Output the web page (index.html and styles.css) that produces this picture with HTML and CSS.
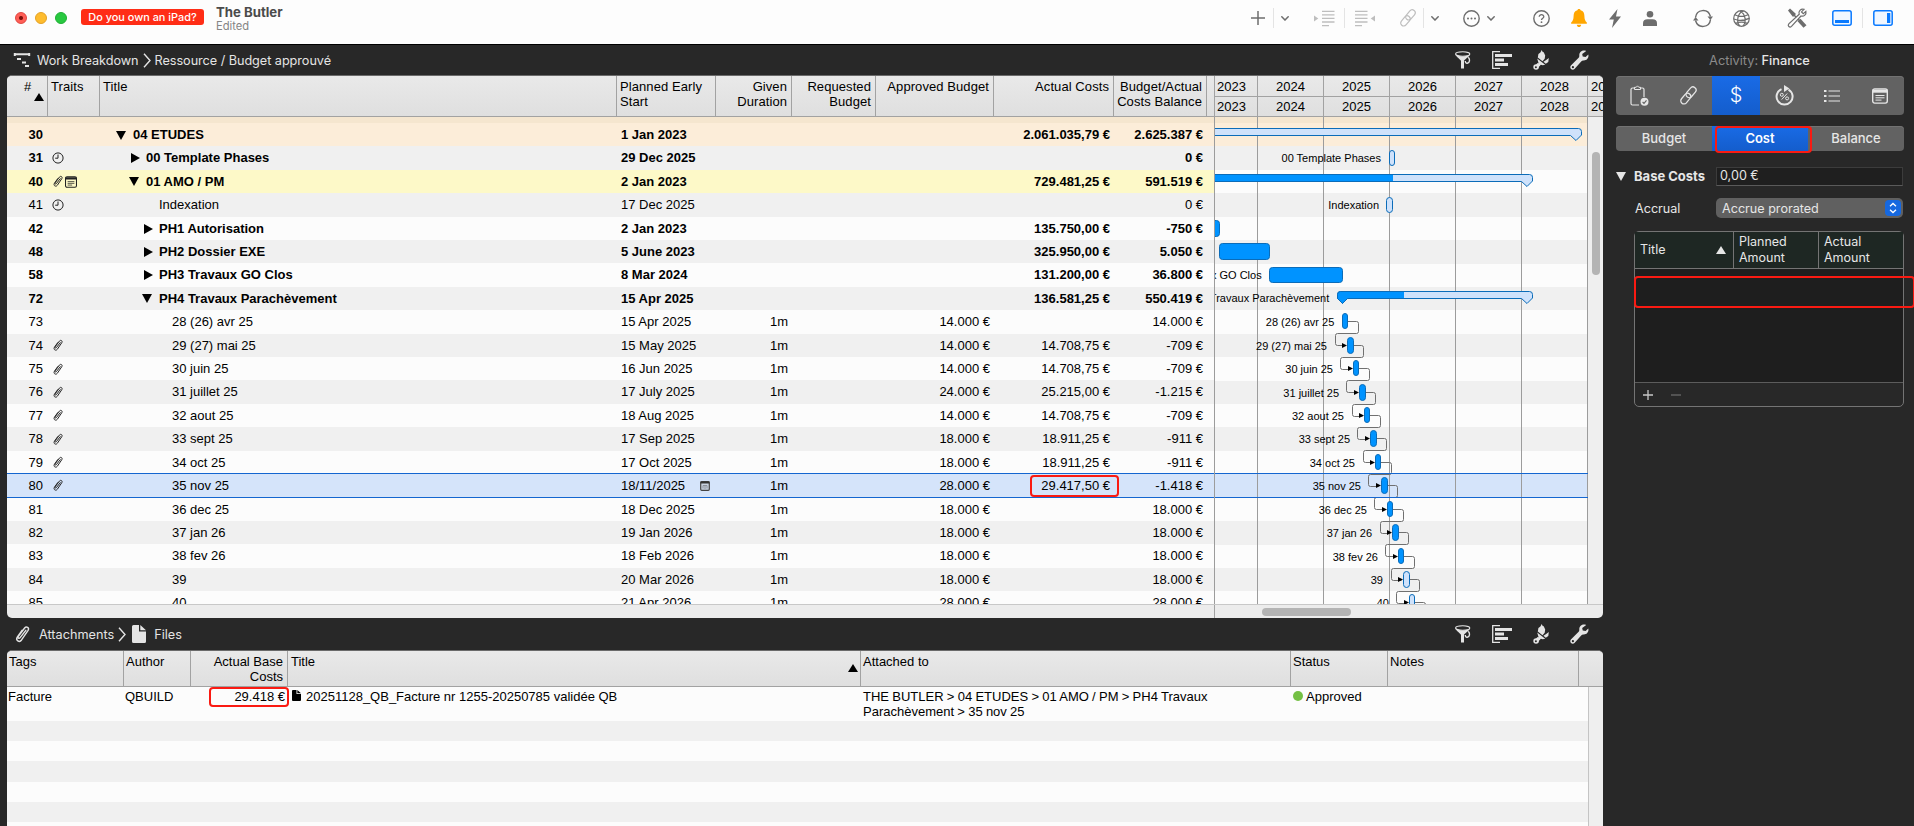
FILE: index.html
```html
<!DOCTYPE html>
<html lang="en">
<head>
    <meta charset="utf-8">
    <title>The Butler</title>
    <link rel="stylesheet" href="styles.css">
</head>
<body onload="buildPage()">

<!-- shared icons -->
<svg width="0" height="0" class="defs">
    <symbol id="i-chev" viewBox="0 0 8 5"><path d="M.8 .8L4 4L7.2 .8" fill="none" stroke="currentColor" stroke-width="1.5" stroke-linecap="round"/></symbol>
    <symbol id="i-link" viewBox="0 0 18 18"><g fill="none" stroke="currentColor" stroke-width="1.200" transform="rotate(-50 9 9)"><rect x="-.6" y="5.900" width="11.400" height="6" rx="3"/><rect x="7.200" y="5.900" width="11.400" height="6" rx="3"/></g></symbol>
    <symbol id="i-clip" viewBox="0 0 14 16"><path d="M9.800 4.500L5 10.600c-.9 1.200-2.300.2-1.500-1L8.800 2.500c1.500-1.900 4.200-.3 2.900 2L6.200 12.600c-1.800 2.500-5.300.4-3.600-2.400L6.600 4.500" fill="none" stroke="currentColor" stroke-width="1.200" stroke-linecap="round"/></symbol>
    <symbol id="i-clock" viewBox="0 0 12 12"><circle cx="6" cy="6" r="5.100" fill="none" stroke="currentColor"/><path d="M6 2.500V6.200H3.200" fill="none" stroke="currentColor"/></symbol>
    <symbol id="i-note" viewBox="0 0 16 16"><rect x=".7" y=".9" width="14.600" height="14.200" rx="2" fill="none" stroke="currentColor" stroke-width="1.400"/><path d="M.7 1.500h14.600v3.200H.7z" fill="currentColor"/><path d="M3.500 7.500h9M3.500 9.800h9M3.500 12.100h6" stroke="currentColor"/></symbol>
    <symbol id="i-funnel" viewBox="0 0 16 18"><ellipse cx="7.700" cy="3" rx="7.100" ry="2.200" fill="none" stroke="currentColor" stroke-width="1.100"/><path d="M.4 3.300C1 6 5.800 8.500 6 10v7.500h3V10C9.200 8.500 14.400 6 15 3.300 12 6.100 3.400 6.100.4 3.300z" fill="currentColor"/><path d="M13.300 6.200c2 2 1.500 5.700-1 6-1.500.1-2-1-2-2.200" fill="none" stroke="currentColor" stroke-width="1.400"/></symbol>
    <symbol id="i-align" viewBox="0 0 20 18"><path d="M8 .7H.7v16.600H8" fill="none" stroke="currentColor" stroke-width="1.300"/><path d="M3 3h17v3H3zM3 7.500h9v3H3zM3 12h13v3H3z" fill="currentColor"/></symbol>
    <symbol id="i-brush" viewBox="0 0 16 20"><path d="M8.700 0l1 2 1 .2 1.500 3.300-.5 3.300-2.200 2.500-4.700-3.700.6-3.500 2-1.500zM4.200 8.500l8 6.300-2.400.5-2-.5-2.500 2.500-2-1.800L5.500 13zM12.800 10.200l3-2.200-.5 4-2.500 1.700-2.400-1.900z" fill="currentColor"/><path d="M5.800 14L3.500 17" stroke="currentColor" stroke-width="3.600"/><circle cx="3.100" cy="17" r="2.800" fill="currentColor"/><circle cx="2.900" cy="17.300" r="1" fill="#282828"/></symbol>
    <symbol id="i-wrench" viewBox="0 0 19 20"><path d="M16.200.9C12.900-.7 9 1.700 9.300 5.600c.1 1-.3 1.700-.9 2.400L.9 15.500c-2 2.600 1.200 5.600 3.600 3.600l6.700-7.700c.7-.7 1.400-1 2.400-.9 3.300.2 5.500-2.900 4.700-6L15.600 7l-2.900-.4-.5-2.700z" fill="currentColor"/><circle cx="2.900" cy="17.200" r="1.100" fill="#282828"/></symbol>
    <symbol id="i-doc" viewBox="0 0 14 18"><path d="M1.500 0H7v6.500h7V16.500q0 1.500-1.500 1.500h-11Q0 18 0 16.500v-15Q0 0 1.500 0zM8.300 0L14 5.300H8.300z" fill="currentColor"/></symbol>
    <symbol id="i-crumb" viewBox="0 0 8 15"><path d="M1 .8L7 7.500L1 14.200" fill="none" stroke="currentColor" stroke-width="1.400"/></symbol>
</svg>

<div class="toolbar">
    <span class="light red"></span><span class="light amber"></span><span class="light green"></span>
    <span class="promo">Do you own an iPad?</span>
    <div class="doc-name"><b>The Butler</b><small>Edited</small></div>

    <div class="tools">
        <svg width="14" height="14"><path d="M7 0v14M0 7h14" stroke="currentColor" stroke-width="1.500"/></svg>
        <i class="sep s1"></i>
        <svg class="m8" width="8" height="5"><use href="#i-chev"/></svg>
        <svg class="m25 off" width="20" height="17"><path d="M0 5.500l4.300 3L0 11.500z" fill="currentColor"/><path d="M8 1.300h12.500M8 4.800h12.500M8 8.400h12.500M8 12h12.500M8 15.700h7" stroke="currentColor" stroke-width="1.300"/></svg>
        <i class="sep s2"></i>
        <svg class="m10 off" width="20" height="17"><path d="M20 5.500l-4.300 3L20 11.500z" fill="currentColor"/><path d="M0 1.300h12.500M0 4.800h12.500M0 8.400h12.500M0 12h12.500M0 15.700h7" stroke="currentColor" stroke-width="1.300"/></svg>
        <svg class="m24 off" width="18" height="18"><use href="#i-link"/></svg>
        <i class="sep s3"></i>
        <svg class="m7" width="8" height="5"><use href="#i-chev"/></svg>
        <svg class="m24" width="17" height="17"><circle cx="8.500" cy="8.500" r="7.700" fill="none" stroke="currentColor" stroke-width="1.400"/><circle cx="5" cy="8.500" r="1" fill="currentColor"/><circle cx="8.500" cy="8.500" r="1" fill="currentColor"/><circle cx="12" cy="8.500" r="1" fill="currentColor"/></svg>
        <svg class="m7" width="8" height="5"><use href="#i-chev"/></svg>
        <svg class="m38" width="17" height="17"><circle cx="8.500" cy="8.500" r="7.700" fill="none" stroke="currentColor" stroke-width="1.400"/><path d="M6.200 6.800c0-3 4.700-2.900 4.600 0 0 1.500-2.300 1.500-2.300 3.300" fill="none" stroke="currentColor" stroke-width="1.300"/><circle cx="8.500" cy="12.200" r=".9" fill="currentColor"/></svg>
        <svg class="m21 bell" width="16" height="18"><path d="M8 0c1 0 1.500.6 1.600 1.300C12.500 2 13.300 4 13.400 7c.1 3.500.6 4.600 2.400 6.500.4.700 0 1.300-.7 1.300H.9c-.7 0-1.100-.6-.7-1.300C2 11.600 2.500 10.500 2.600 7c.1-3 .9-5 3.800-5.700C6.500.6 7 0 8 0zM5.800 15.700h4.400C10 17.300 9.100 18 8 18s-2-.7-2.200-2.300z" fill="currentColor"/></svg>
        <svg class="m22" width="12" height="19"><path d="M8.500 0L0 10.500h4.800L3 19l9-11.500H7z" fill="currentColor"/></svg>
        <svg class="m22" width="14" height="15"><circle cx="7" cy="3.300" r="3.300" fill="currentColor"/><path d="M0 15v-2.500Q0 8.300 4.500 8.300h5q4.500 0 4.500 4.200V15z" fill="currentColor"/></svg>
        <svg class="m36" width="20" height="19"><path d="M2.500 8.500C3.500.3 14.800-1.300 17.500 7.500M17.500 10.500c-1 8.200-12.300 9.800-15 1" fill="none" stroke="currentColor" stroke-width="1.500"/><path d="M14.500 7.500h5.500L17.400 11zM0 11.500h5.500L2.600 8z" fill="currentColor"/></svg>
        <svg class="m20" width="17" height="17"><g fill="none" stroke="currentColor" stroke-width="1.200"><circle cx="8.500" cy="8.500" r="7.800"/><path d="M10.500.9C3.500 3.500 3.500 13.500 7 16M7 1c6.500 3.500 6 12 3 15M1.800 4.800c4 2 9 2 13.200 0M.8 9c5 1.800 11 1.400 15.400-.6M2.500 13.200c4-1.300 8-1.300 11.700 0"/></g></svg>
        <svg class="m37" width="20" height="20"><path d="M1 2.500L3 .5l6 5.500-3 3z" fill="currentColor"/><path d="M7 7l6 6" stroke="currentColor" stroke-width="1.500"/><path d="M12 12l6 6.500" stroke="currentColor" stroke-width="4"/><path d="M17 1.300c-3.200-.9-6 2-4.800 5L1.800 15.800c-1.600 2 .8 4.300 2.700 2.600L14 8c3 .9 5.600-1.600 4.900-4.600L16.300 5.700l-1.800-1.800z" fill="#fdfdfd" stroke="currentColor" stroke-width="1.200"/></svg>
        <svg class="m25 blue" width="20" height="16"><rect x=".8" y=".8" width="18.400" height="14.400" rx="2" fill="#f1f7ff" stroke="currentColor" stroke-width="1.500"/><path d="M3 10h14v3H3z" fill="currentColor"/></svg>
        <i class="sep s4"></i>
        <svg class="m10 blue" width="20" height="16"><rect x=".8" y=".8" width="18.400" height="14.400" rx="2" fill="#f1f7ff" stroke="currentColor" stroke-width="1.500"/><path d="M14 3h3.300v10H14z" fill="currentColor"/></svg>
    </div>
</div>

<div class="main">
    <div class="left">

        <div class="crumbs">
            <svg class="c-wb" width="16" height="14"><path d="M0 1.200h16M.8 0v3M15.200 0v3M3 6h4M8 9.500h4M11 13h4" stroke="currentColor" stroke-width="2"/></svg>
            <span>Work Breakdown</span>
            <svg class="arrow" width="8" height="15"><use href="#i-crumb"/></svg>
            <span>Ressource / Budget approuvé</span>
            <div class="crumb-tools">
                <svg width="16" height="18"><use href="#i-funnel"/></svg>
                <svg width="20" height="18"><use href="#i-align"/></svg>
                <svg width="16" height="20"><use href="#i-brush"/></svg>
                <svg width="19" height="20"><use href="#i-wrench"/></svg>
            </div>
        </div>

        <div class="panel wb">
            <div class="wb-head">
                <div class="cols head">
                    <div class="num">#<i class="sort"></i></div>
                    <div>Traits</div>
                    <div>Title</div>
                    <div>Planned Early<br>Start</div>
                    <div class="r">Given<br>Duration</div>
                    <div class="r">Requested<br>Budget</div>
                    <div class="r">Approved Budget</div>
                    <div class="r">Actual Costs</div>
                    <div class="r">Budget/Actual<br>Costs Balance</div>
                </div>
                <div class="years">
                    <span class="first">2023</span><span>2024</span><span>2025</span><span>2026</span><span>2027</span><span>2028</span><span class="last">2029</span>
                    <span class="first">2023</span><span>2024</span><span>2025</span><span>2026</span><span>2027</span><span>2028</span><span class="last">2029</span>
                </div>
            </div>
            <div class="wb-body">
                <div class="rows" id="rows"></div>
                <div class="gantt" id="gantt"></div>
                <div class="vscroll"><i></i></div>
            </div>
            <div class="hscroll"><div><i></i></div></div>
        </div>

        <div class="crumbs second">
            <svg class="c-att" width="17" height="19"><use href="#i-clip"/></svg>
            <span>Attachments</span>
            <svg class="arrow a2" width="8" height="15"><use href="#i-crumb"/></svg>
            <svg class="c-doc" width="14" height="18"><use href="#i-doc"/></svg>
            <span>Files</span>
            <div class="crumb-tools">
                <svg width="16" height="18"><use href="#i-funnel"/></svg>
                <svg width="20" height="18"><use href="#i-align"/></svg>
                <svg width="16" height="20"><use href="#i-brush"/></svg>
                <svg width="19" height="20"><use href="#i-wrench"/></svg>
            </div>
        </div>

        <div class="panel att">
            <div class="att-cols att-head">
                <div>Tags</div>
                <div>Author</div>
                <div class="r">Actual Base<br>Costs</div>
                <div class="t">Title<i class="sort"></i></div>
                <div>Attached to</div>
                <div>Status</div>
                <div>Notes</div>
                <div></div>
            </div>
            <div class="att-body">
                <div class="att-list">
                    <div class="att-cols att-row">
                        <div>Facture</div>
                        <div>QBUILD</div>
                        <div class="r cost">29.418 €<i class="mark m-cost"></i></div>
                        <div class="file"><svg width="9" height="11" viewBox="0 0 14 18" preserveAspectRatio="none"><use href="#i-doc"/></svg>20251128_QB_Facture nr 1255-20250785 validée QB</div>
                        <div class="path">THE BUTLER &gt; 04 ETUDES &gt; 01 AMO / PM &gt; PH4 Travaux<br>Parachèvement &gt; 35 nov 25</div>
                        <div class="status"><i></i>Approved</div>
                        <div></div>
                    </div>
                    <div class="stripes"></div>
                </div>
                <div class="vscroll"></div>
            </div>
        </div>
    </div>

    <div class="side">
        <h4><span>Activity:</span> Finance</h4>
        <div class="seg icons">
            <div><svg width="20" height="22"><path d="M5 3H2.500Q1 3 1 4.500v14Q1 20 2.500 20H9M10 3h2.500Q14 3 14 4.500V12" fill="none" stroke="currentColor" stroke-width="1.200"/><path d="M4.500 4.500V2.300H6.200Q7.500-.6 8.800 2.300h1.700v2.200z" fill="none" stroke="currentColor"/><circle cx="14.500" cy="16.800" r="4" fill="currentColor"/><path d="M12.600 17l1.400 1.400 2.500-3" fill="none" stroke="#626262" stroke-width="1.100"/></svg></div>
            <div><svg width="19" height="19"><use href="#i-link"/></svg></div>
            <div class="on dollar">$</div>
            <div><svg width="19" height="21"><path d="M6.500 4.200A8 8 0 1 0 13.500 4.600" fill="none" stroke="currentColor" stroke-width="2"/><path d="M9 0l5.500 3.500L9 7z" fill="currentColor"/><path d="M12.200 8.500l-5.500 6" stroke="currentColor"/><circle cx="6.800" cy="9.800" r="1.500" fill="none" stroke="currentColor"/><circle cx="12.100" cy="13.400" r="1.500" fill="none" stroke="currentColor"/></svg></div>
            <div><svg width="16" height="14"><path d="M0 2h2.500M0 7h2.500M0 12h2.500" stroke="currentColor" stroke-width="1.800"/><path d="M4.500 2H16M4.500 7H16M4.500 12H16" stroke="currentColor" stroke-width="1.100"/></svg></div>
            <div><svg width="16" height="16"><use href="#i-note"/></svg></div>
        </div>
        <div class="seg tabs">
            <div>Budget</div>
            <div class="on">Cost<i class="mark m-tab"></i></div>
            <div>Balance</div>
        </div>
        <div class="field base">
            <i class="tri"></i><b>Base Costs</b><div class="input">0,00 €</div>
        </div>
        <div class="field accrual">
            <span>Accrual</span>
            <div class="select">Accrue prorated<svg width="16" height="16"><rect width="16" height="16" rx="4" fill="#1568e0"/><path d="M5 6.300L8 3.500l3 2.800M5 9.700l3 2.800 3-2.800" fill="none" stroke="#fff" stroke-width="1.300"/></svg></div>
        </div>
        <div class="costs">
            <div class="costs-head">
                <div class="c1">Title<i class="sort"></i></div>
                <div>Planned<br>Amount</div>
                <div>Actual<br>Amount</div>
            </div>
            <div class="costs-body"></div>
            <div class="costs-foot">
                <svg width="10" height="10"><path d="M5 0v10M0 5h10" stroke="#c8c8c8" stroke-width="1.300"/></svg>
                <svg width="10" height="10"><path d="M0 5h10" stroke="#6a6a6a" stroke-width="1.300"/></svg>
            </div>
            <i class="mark m-row"></i>
        </div>
    </div>
</div>

<script src="script.js"></script>
</body>
</html>
```

FILE: styles.css
```css
*{
    box-sizing:border-box;
}

body{
    margin:0;
    width:1914px;
    height:826px;
    overflow:hidden;
    background:#282828;
    font-family:"Liberation Sans", Arial, sans-serif;
    font-size:13px;
    line-height:15px;
    color:#000;
    white-space:nowrap;
}

svg{
    display:block;
    flex:none;
    overflow:visible;
}

.defs{
    position:absolute;
}

/* toolbar */
.toolbar{
    display:flex;
    height:45px;
    padding-left:15px;
    background:#fdfdfd;
    border-bottom:1px solid #000;
    font-family:Inter, sans-serif;
}

.light{
    width:12px;
    height:12px;
    margin:12px 8px 0 0;
    border-radius:50%;
    border:1px solid #e0443e;
}
.light.red{
    background:radial-gradient(circle, #7c0f0a 0 1.5px, #ff5f57 2.5px);
}
.light.amber{
    background:#febc2e;
    border-color:#e5a226;
}
.light.green{
    background:#28c840;
    border-color:#20b035;
}

.promo{
    width:123px;
    height:16px;
    margin:9px 0 0 6px;
    border-radius:3px;
    background:#ff2d16;
    color:#fff;
    font-size:10.9px;
    font-weight:500;
    line-height:16px;
    text-align:center;
}

.doc-name{
    width:200px;
    margin:4px 0 0 12px;
    color:#4b4b4b;
}
.doc-name b{
    display:block;
    font-size:13.2px;
    line-height:16px;
}
.doc-name small{
    display:block;
    font-size:11.2px;
    line-height:13px;
    color:#858585;
}

.tools{
    display:flex;
    align-items:center;
    height:36px;
    margin-left:835px;
    color:#6d6d6d;
}
.off{ color:#bebebe; }
.bell{ color:#ffa600; }
.blue{ color:#0a7aff; }
.m7{ margin-left:7px; }
.m8{ margin-left:7px; }
.m10{ margin-left:10px; }
.m20{ margin-left:20px; }
.m21{ margin-left:21px; }
.m22{ margin-left:22px; }
.m24{ margin-left:24px; }
.m25{ margin-left:25px; }
.m36{ margin-left:36px; }
.m37{ margin-left:37px; }
.m38{ margin-left:38px; }

.sep{
    width:1px;
    height:20px;
    background:#e4e4e4;
}
.s1{ margin-left:8px; }
.s2{ margin-left:10px; }
.s3{ margin-left:6px; }
.s4{ margin-left:10px; }

/* layout */
.main{
    display:flex;
    height:781px;
}
.left{
    width:1604px;
    padding-left:7px;
}

.crumbs{
    display:flex;
    align-items:center;
    height:30px;
    padding-left:7px;
    color:#e4e4e4;
    font-family:Inter, sans-serif;
    font-size:12.7px;
    letter-spacing:-.05px;
}
.crumbs.second{
    height:32px;
    letter-spacing:0;
}
.c-wb{ margin-right:7px; }
.c-att{ margin-right:8px; }
.c-doc{ margin-right:8px; }
.arrow{ margin:0 4px; }
.arrow.a2{ margin-right:6px; }

.crumb-tools{
    display:flex;
    align-items:center;
    gap:21px;
    margin-left:auto;
    margin-right:15px;
}

.panel{
    width:1596px;
    overflow:hidden;
    border-top:1px solid #6a6a6a;
    border-radius:5px;
    background:#ececec;
}
.wb{
    height:543px;
}
.att{
    height:176px;
    border-radius:5px 5px 0 0;
}

/* work breakdown table */
.wb-head{
    display:flex;
    height:41px;
    border-bottom:1px solid #a2a2a2;
    background:linear-gradient(#e9e9e9, #dfdfdf);
}
.cols{
    display:grid;
    grid-template-columns:41px 52px 517px 99px 76px 84px 118px 120px 93px;
    width:1207px;
}
.head > div{
    padding:3px 4px 0 3px;
    border-right:1px solid #a2a2a2;
    letter-spacing:.08px;
}
.head .num{
    display:flex;
    padding-left:17px;
}
.r{
    text-align:right;
}
.sort{
    border:5px solid transparent;
    border-top:none;
    border-bottom:8px solid #000;
    width:0;
    height:0;
}
.num .sort{
    margin:14px 0 0 3px;
}

.years{
    display:grid;
    grid-template-columns:43px 66px 66px 66px 66px 66px 15px;
    grid-template-rows:21px 19px;
    border-left:1px solid #a2a2a2;
    width:389px;
    line-height:21px;
    text-align:center;
}
.years span{
    overflow:hidden;
    border-right:1px solid #a2a2a2;
    border-bottom:1px solid #a2a2a2;
}
.years span:nth-child(n+8){
    border-bottom:none;
    line-height:20px;
}
.years .first{
    text-align:left;
    padding-left:2px;
}
.years .last{
    border-right:none;
    text-align:left;
    padding-left:3px;
}

.wb-body{
    display:flex;
    height:487px;
}
.rows{
    width:1207px;
    overflow:hidden;
}
.row{
    height:23.42px;
    line-height:24px;
}
.row.peek{
    height:6px;
    background:#f5e6cf;
}
.row > div{
    padding:0 4px 0 4px;
}
.row .n{
    text-align:right;
    padding-right:5px;
}
.row .traits{
    display:flex;
    align-items:center;
    gap:1px;
    padding-left:4px;
    color:#222;
}
.row .title{
    display:flex;
    align-items:center;
}
.row .actual{
    position:relative;
}
.row .start{
    display:flex;
    align-items:center;
    justify-content:space-between;
    padding-right:6px;
}
.even{ background:#fcfcfc; }
.odd{ background:#f0f0f0; }
.orange{ background:#fcedd9; }
.yellow{ background:#fdf9c8; }
.bold{ font-weight:bold; }
.sel{
    height:25px;
    margin:-1.3px 0 -.28px;
    background:#d5e4fa;
    border:solid #1466d0;
    border-width:1px 0;
}

.open, .closed{
    width:10px;
    flex:none;
    margin-right:6px;
}
.open:before, .closed:before{
    content:"";
    display:block;
    width:0;
    height:0;
}
.open:before{
    margin-left:-1px;
    border:5.5px solid transparent;
    border-top:9px solid #000;
    border-bottom:none;
}
.closed:before{
    margin-left:1px;
    border:5.5px solid transparent;
    border-left:9px solid #000;
    border-right:none;
}

/* gantt */
.gantt{
    width:374px;
    flex:none;
}
.gantt text{
    font-size:11px;
    text-anchor:end;
}
.gantt .bar{
    stroke:#0b6cb9;
    stroke-width:1;
}
.gantt .done{ fill:#0093ff; }
.gantt .todo{ fill:#cfe2fb; }
.gantt .wire{
    fill:none;
    stroke:#707070;
}
.gantt .grid{
    stroke:#9c9c9c;
}

.vscroll{
    width:15px;
    margin-left:auto;
    padding:35px 0 0 4px;
    background:#efefef;
}
.vscroll i{
    display:block;
    width:8px;
    height:123px;
    border-radius:4px;
    background:#b4b4b4;
}
.hscroll{
    height:14px;
    border-top:1px solid #c8c8c8;
    padding-left:1207px;
}
.hscroll div{
    height:14px;
    border-left:1px solid #a2a2a2;
    padding:3px 0 0 47px;
}
.hscroll i{
    display:block;
    width:89px;
    height:8px;
    border-radius:4px;
    background:#b4b4b4;
}

/* attachments */
.att-cols{
    display:grid;
    grid-template-columns:117px 67px 97px 573px 430px 97px 191px;
}
.att-head{
    grid-template-columns:117px 67px 97px 573px 430px 97px 191px 24px;
    height:36px;
    border-bottom:1px solid #a2a2a2;
    background:linear-gradient(#e9e9e9, #dfdfdf);
}
.att-head > div{
    padding:3px 4px 0 2px;
    border-right:1px solid #a2a2a2;
}
.att-head > div:last-child{
    border-right:none;
}
.att-head .t{
    display:flex;
    justify-content:space-between;
    padding-left:3px;
}
.att-head .sort{
    margin:10px -2px 0 0;
}
.att-body{
    display:flex;
    height:139px;
}
.att-list{
    width:1581px;
}
.att-body .vscroll{
    border-left:1px solid #c4c4c4;
}
.att-row{
    height:34px;
    padding-top:2px;
    background:#fcfcfc;
}
.att-row > div{
    padding-left:1px;
}
.att-row .cost{
    position:relative;
    padding-right:3px;
}
.att-row .path{
    padding-left:2px;
    word-spacing:-.35px;
}
.file{
    display:flex;
}
.att-row .file{
    padding-left:4px;
}
.file svg{
    margin:1px 5px 0 0;
}
.status i{
    display:inline-block;
    width:10px;
    height:10px;
    margin:0 3px 0 1px;
    border-radius:50%;
    background:#74c044;
}
.stripes{
    height:105px;
    background:repeating-linear-gradient(#f0f0f0 0 20.2px, #fcfcfc 20.2px 40.4px);
}

/* red frames laid over the content */
.mark{
    position:absolute;
    border:2px solid #fa1a12;
    border-radius:4px;
}
.m-actual{
    left:36px;
    top:1px;
    width:89px;
    height:22px;
}
.m-cost{
    left:18px;
    top:-2px;
    width:80px;
    height:20px;
}
.m-tab{
    left:3px;
    top:0;
    width:97px;
    height:27px;
}
.m-row{
    left:-1px;
    top:44px;
    width:281px;
    height:32px;
}

/* inspector */
.side{
    width:310px;
    padding-left:12px;
    color:#e6e6e6;
    font-family:Inter, sans-serif;
}
.side h4{
    margin:0;
    height:31px;
    padding-right:22px;
    line-height:31px;
    font-size:12.8px;
    font-weight:500;
    text-align:center;
    width:309px;
}
.side h4 span{
    color:#8b8b8b;
    font-weight:400;
}
.seg{
    display:flex;
    width:288px;
    border-radius:4px;
    background:#626262;
    box-shadow:inset 0 1px #727272;
}
.seg > div{
    flex:1;
    display:flex;
    align-items:center;
    justify-content:center;
}
.seg .on{
    background:linear-gradient(#196be6, #145dcc);
    color:#fff;
}
.icons{
    height:39px;
}
.seg .dollar{
    font-size:20px;
    font-weight:300;
}
.tabs{
    height:25px;
    margin-top:11px;
    font-weight:500;
}
.tabs .on{
    position:relative;
    font-weight:600;
}

.field{
    display:flex;
    align-items:center;
}
.base{
    height:20px;
    margin-top:15px;
}
.tri{
    border:5.5px solid transparent;
    border-top:9px solid #e6e6e6;
    border-bottom:none;
    margin-right:8px;
}
.base b{
    width:82px;
    font-size:13px;
}
.input{
    width:187px;
    height:19px;
    padding-left:3px;
    line-height:16px;
    background:#1f1f1f;
    border:1px solid #3c3c3c;
    border-bottom-color:#5a5a5a;
    font-size:12.6px;
}
.accrual{
    height:20px;
    margin-top:12px;
    padding-left:19px;
    font-size:12.6px;
}
.accrual span{
    width:81px;
}
.select{
    display:flex;
    align-items:center;
    justify-content:space-between;
    width:187px;
    height:20px;
    padding:0 2px 0 6px;
    border-radius:5px;
    background:#606060;
}

.costs{
    position:relative;
    width:270px;
    height:176px;
    margin:13px 0 0 18px;
    border:1px solid #747474;
    border-radius:5px;
    font-size:12.5px;
}
.costs-head{
    display:grid;
    grid-template-columns:98px 85px 85px;
    height:37px;
    border-bottom:1px solid #747474;
    background:#1e2723;
    line-height:16px;
}
.costs-head > div{
    padding:2px 0 0 5px;
    border-left:1px solid #747474;
}
.costs-head .c1{
    display:flex;
    align-items:center;
    justify-content:space-between;
    padding:0 7px 0 5px;
    border-left:none;
}
.costs-head .sort{
    border-width:0 5.5px 8px;
    border-bottom-color:#e6e6e6;
}
.costs-body{
    height:113px;
    background:#1e1e1e;
}
.costs-foot{
    display:flex;
    gap:18px;
    border-top:1px solid #5c5c5c;
    padding:7px 8px;
}
```

FILE: script.js
```javascript
// number, traits, indent, arrow, title, start, duration, approved, actual, balance, style
var rows = [
    [30, "", 29, "open", "04 ETUDES", "1 Jan 2023", "", "", "2.061.035,79 €", "2.625.387 €", "bold orange"],
    [31, "clock", 42, "closed", "00 Template Phases", "29 Dec 2025", "", "", "", "0 €", "bold"],
    [40, "clip note", 42, "open", "01 AMO / PM", "2 Jan 2023", "", "", "729.481,25 €", "591.519 €", "bold yellow"],
    [41, "clock", 55, "", "Indexation", "17 Dec 2025", "", "", "", "0 €", ""],
    [42, "", 55, "closed", "PH1 Autorisation", "2 Jan 2023", "", "", "135.750,00 €", "-750 €", "bold"],
    [48, "", 55, "closed", "PH2 Dossier EXE", "5 June 2023", "", "", "325.950,00 €", "5.050 €", "bold"],
    [58, "", 55, "closed", "PH3 Travaux GO Clos", "8 Mar 2024", "", "", "131.200,00 €", "36.800 €", "bold"],
    [72, "", 55, "open", "PH4 Travaux Parachèvement", "15 Apr 2025", "", "", "136.581,25 €", "550.419 €", "bold"],
    [73, "", 68, "", "28 (26) avr 25", "15 Apr 2025", "1m", "14.000 €", "", "14.000 €", ""],
    [74, "clip", 68, "", "29 (27) mai 25", "15 May 2025", "1m", "14.000 €", "14.708,75 €", "-709 €", ""],
    [75, "clip", 68, "", "30 juin 25", "16 Jun 2025", "1m", "14.000 €", "14.708,75 €", "-709 €", ""],
    [76, "clip", 68, "", "31 juillet 25", "17 July 2025", "1m", "24.000 €", "25.215,00 €", "-1.215 €", ""],
    [77, "clip", 68, "", "32 aout 25", "18 Aug 2025", "1m", "14.000 €", "14.708,75 €", "-709 €", ""],
    [78, "clip", 68, "", "33 sept 25", "17 Sep 2025", "1m", "18.000 €", "18.911,25 €", "-911 €", ""],
    [79, "clip", 68, "", "34 oct 25", "17 Oct 2025", "1m", "18.000 €", "18.911,25 €", "-911 €", ""],
    [80, "clip", 68, "", "35 nov 25", "18/11/2025", "1m", "28.000 €", "29.417,50 €", "-1.418 €", "sel"],
    [81, "", 68, "", "36 dec 25", "18 Dec 2025", "1m", "18.000 €", "", "18.000 €", ""],
    [82, "", 68, "", "37 jan 26", "19 Jan 2026", "1m", "18.000 €", "", "18.000 €", ""],
    [83, "", 68, "", "38 fev 26", "18 Feb 2026", "1m", "18.000 €", "", "18.000 €", ""],
    [84, "", 68, "", "39", "20 Mar 2026", "1m", "18.000 €", "", "18.000 €", ""],
    [85, "", 68, "", "40", "21 Apr 2026", "1m", "28.000 €", "", "28.000 €", ""]
];

// left edge of every monthly bar, from row 73 down
var months = [1342, 1347, 1353, 1359, 1364, 1370, 1375, 1381, 1387, 1392, 1398, 1403, 1409];

var rowHeight = 23.42;
var calendar = '<svg width="10" height="10"><rect x=".7" y=".7" width="8.6" height="8.6" rx="1" fill="#c9d3e2" stroke="#444" stroke-width="1.2"/><path d="M.5 1.5h9" stroke="#333" stroke-width="2"/><path d="M3 7.5v-3h4v3M5 8V5" fill="none" stroke="#8a8f98"/></svg>';

function item(id){
    return document.getElementById(id);
}

function stripe(i){
    return i % 2 ? "odd" : "even";
}

function rowTop(i){
    return Math.round(123 + i*rowHeight);
}

function traits(names){
    var html = "";
    if(names.indexOf("clock") > -1) html += '<svg width="12" height="12"><use href="#i-clock"/></svg>';
    if(names.indexOf("clip") > -1) html += '<svg width="12" height="13"><use href="#i-clip"/></svg>';
    if(names.indexOf("note") > -1) html += '<svg width="12" height="12"><use href="#i-note"/></svg>';
    return html;
}

function buildRows(){
    var html = '<div class="row peek"></div>';
    for(var i=0; i<rows.length; i++){
        var r = rows[i];
        var selected = r[10] == "sel";
        var indent = r[3] ? r[2] - 12 : r[2] + 4;
        html += '<div class="row cols ' + stripe(i) + ' ' + r[10] + '">'
            + '<div class="n">' + r[0] + '</div>'
            + '<div class="traits">' + traits(r[1]) + '</div>'
            + '<div class="title" style="padding-left:' + indent + 'px">'
            + (r[3] ? '<i class="' + r[3] + '"></i>' : '') + r[4] + '</div>'
            + '<div class="start">' + r[5] + (selected ? calendar : '') + '</div>'
            + '<div class="r">' + r[6] + '</div>'
            + '<div></div>'
            + '<div class="r">' + r[7] + '</div>'
            + '<div class="r actual">' + r[8] + (selected ? '<i class="mark m-actual"></i>' : '') + '</div>'
            + '<div class="r">' + r[9] + '</div></div>';
    }
    item("rows").innerHTML = html;
}

function rect(x, y, w, h, fill){
    return '<rect x="' + x + '" y="' + y + '" width="' + w + '" height="' + h + '" fill="' + fill + '"/>';
}

function bar(x1, x2, y, h, cls){
    return '<rect class="bar ' + cls + '" x="' + (x1+.5) + '" y="' + (y+.5) + '" width="' + (x2-x1-1)
        + '" height="' + (h-1) + '" rx="' + Math.min(3, (x2-x1-1)/2) + '"/>';
}

function label(x, y, txt){
    return '<text x="' + x + '" y="' + y + '">' + txt + '</text>';
}

// summary bar with a tip at the end, filled up to the done mark
function summary(x1, x2, y, done){
    var b = y + 7;
    var start = x1 < 1215 ? 'M' + x1 + ' ' + y + 'H' : 'M' + (x1+5) + ' ' + (b+5) + 'l-5 -5V' + (y+3) + 'q0 -3 3 -3H';
    var d = start + (x2-3) + 'q3 0 3 3V' + (b-.5) + 'l-5.5 5.5l-5.5 -5H' + (x1 < 1215 ? x1 : x1+10) + 'z';
    var id = "cut" + Math.floor(y);
    var html = '<path class="bar todo" d="' + d + '"/>';
    if(done){
        html = '<clipPath id="' + id + '"><rect x="1200" y="' + (y-2) + '" width="' + (done-1200) + '" height="20"/></clipPath>'
            + html + '<path class="bar done" clip-path="url(#' + id + ')" d="' + d + '"/>';
    }
    return html;
}

function buildGantt(){
    var html = '<svg width="374" height="487" viewBox="1214 117 374 487" style="overflow:hidden">';
    var i, top;

    html += rect(1207, 117, 381, 6, "#f5e6cf");
    for(i=0; i<rows.length; i++){
        var fill = i % 2 ? "#f0f0f0" : "#fcfcfc";
        if(i == 0) fill = "#fcedd9";
        if(i == 15) fill = "#d5e4fa";
        html += rect(1207, rowTop(i), 381, 24, fill);
    }
    for(i=0; i<6; i++){
        html += '<path class="grid" d="M' + (1257.5 + i*66) + ' 117v487"/>';
    }

    html += summary(1200, 1581.5, 128.5, 0);
    html += bar(1389, 1395, 150, 16, "todo") + label(1381, 162, "00 Template Phases");
    html += summary(1200, 1532.5, 174.5, 1393);
    html += bar(1386, 1393, 197, 16, "todo") + label(1379, 209, "Indexation");
    html += bar(1200, 1220, 220, 17, "done");
    html += bar(1219, 1270, 243, 17, "done");
    html += bar(1269, 1343, 267, 16, "done") + label(1261.7, 279, "PH3 Travaux GO Clos");
    html += summary(1337.5, 1532.5, 291.5, 1404) + label(1329.3, 302, "PH4 Travaux Parachèvement");

    for(i=0; i<months.length; i++){
        top = rowTop(i+8);
        var x = months[i];
        var y = top + 11.5;
        // connector to the next month
        html += '<path class="wire" d="M' + (x+6) + ' ' + y + 'h8.5q2 0 2 2v8q0 2 -2 2H' + (x-4.5)
            + 'q-2 0 -2 2v8q0 2 2 2h8"/>';
        if(i > 0){
            html += '<path d="M' + (x-5) + ' ' + (y-2.5) + 'l5 2.5l-5 2.5z"/>';
        }
        html += label(i ? x-20 : x-7.7, top+15.5, rows[i+8][4]);
    }
    for(i=0; i<months.length; i++){
        html += bar(months[i], months[i] + (i % 2 ? 7 : 6), rowTop(i+8)+3, i % 2 ? 17 : 16, i > 10 ? "todo" : "done");
    }

    html += rect(1214, 473, 374, 1, "#1466d0") + rect(1214, 497, 374, 1, "#1466d0");
    html += rect(1214, 117, 1, 487, "#9c9c9c");
    html += '</svg>';
    item("gantt").innerHTML = html;
}

function buildPage(){
    buildRows();
    buildGantt();
}
```
